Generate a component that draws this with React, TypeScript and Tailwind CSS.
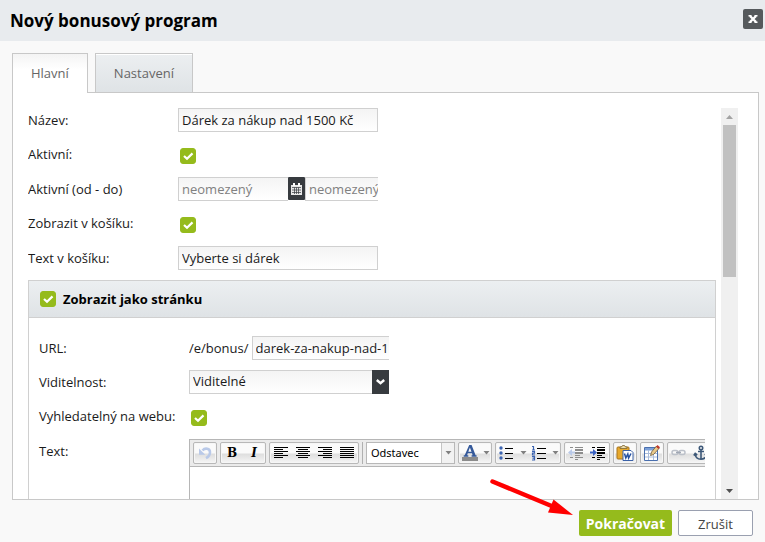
import { useState } from 'react'
import type { ComponentProps, ReactNode } from 'react'

const inputStyle =
  'h-6 border border-[#d0d0d0] bg-linear-to-b from-[#f4f4f4] to-white px-[3px] text-[13px] text-[#1a1a1a] outline-none placeholder:text-[#808080]'

function Check(props: ComponentProps<'input'>) {
  return (
    <span className="relative block size-4 shrink-0">
      <input
        type="checkbox"
        defaultChecked
        className="peer block size-4 appearance-none rounded-[3px] border border-[#c8c8c8] bg-white checked:border-[#95bb1c] checked:bg-[#95bb1c]"
        {...props}
      />
      <svg
        viewBox="0 0 16 16"
        className="pointer-events-none absolute inset-0 hidden size-4 peer-checked:block"
        fill="none"
        stroke="#fff"
        strokeWidth="2.2"
      >
        <path d="M4 8 7 10.800 12.500 5.400" />
      </svg>
    </span>
  )
}

type RowProps = { label: string; htmlFor: string; check?: boolean; children: ReactNode }

function Row({ label, htmlFor, check, children }: RowProps) {
  return (
    <div className={check ? 'flex h-[35px] items-start' : 'flex h-[34px] items-start'}>
      <label htmlFor={htmlFor} className="w-[150px] shrink-0 leading-6 whitespace-nowrap">
        {label}
      </label>
      {check ? <div className="pt-1.5 pl-0.5">{children}</div> : children}
    </div>
  )
}

// Skupina tlačítek v editoru
function Group({ children }: { children: ReactNode }) {
  return (
    <div className="flex h-[22px] shrink-0 items-stretch rounded-[2px] border border-[#b8b8b8] bg-linear-to-b from-[#fafafa] from-50% via-[#dedede] via-55% to-[#f6f6f6] shadow-[inset_0_0_0_1px_#f6f6f6]">
      {children}
    </div>
  )
}

function Tool({ title, children }: { title: string; children: ReactNode }) {
  return (
    <button type="button" title={title} aria-label={title} className="flex w-[22px] items-center justify-center text-black">
      {children}
    </button>
  )
}

function Caret() {
  return (
    <svg width="7" height="4" viewBox="0 0 7 4" className="shrink-0">
      <path d="M0.5 0h6L3.5 3.5z" fill="#808080" />
    </svg>
  )
}

function DropTool({ title, children }: { title: string; children: ReactNode }) {
  return (
    <button type="button" title={title} aria-label={title} className="flex w-8 items-center justify-between pr-px pl-[3px]">
      {children}
      <Caret />
    </button>
  )
}

function Lines({ d }: { d: string }) {
  return (
    <svg width="16" height="16" viewBox="0 0 16 16" shapeRendering="crispEdges" fill="none" stroke="#000">
      <path d={d} />
    </svg>
  )
}

function Indent({ arrow, arrowColor, color }: { arrow: string; arrowColor: string; color: string }) {
  return (
    <svg width="16" height="16" viewBox="0 0 16 16">
      <path
        d="M2 2.5h3M7 2.5h8M7 5h8M7 8h8M7 10.500h5M2 12.500h3M7 12.500h8M7 14.500h3"
        stroke={color}
        strokeWidth="1.200"
        shapeRendering="crispEdges"
      />
      <path d={arrow} fill={arrowColor} />
    </svg>
  )
}

function Toolbar() {
  return (
    <div className="flex h-[27px] gap-[3px] border-b border-[#b6b6b6] bg-[#ebebeb] px-[3px] pt-0.5">
      <Group>
        <Tool title="Zpět">
          <svg width="16" height="16" viewBox="0 0 16 16" fill="none">
            <path d="M5.5 5.5C8 2.5 13 3.2 13 7.2c0 2.6-1.6 4.6-4 6" stroke="#b9c9e8" strokeWidth="2.6" />
            <path d="M2 3.5v6.3h6.3z" fill="#b9c9e8" />
          </svg>
        </Tool>
      </Group>
      <Group>
        <Tool title="Tučné">
          <span className="font-['DejaVu_Serif',serif] text-[12px] leading-4 font-bold">B</span>
        </Tool>
        <Tool title="Kurzíva">
          <span className="font-['DejaVu_Serif',serif] text-[12px] leading-4 font-bold italic">I</span>
        </Tool>
      </Group>
      <Group>
        <Tool title="Zarovnat vlevo">
          <Lines d="M1 2.5h14M1 4.5h9M1 6.5h14M1 8.5h9M1 10.5h14M1 12.5h9" />
        </Tool>
        <Tool title="Zarovnat na střed">
          <Lines d="M1 2.5h14M3 4.5h10M1 6.5h14M3 8.5h10M1 10.5h14M3 12.5h10" />
        </Tool>
        <Tool title="Zarovnat vpravo">
          <Lines d="M1 2.5h14M6 4.5h9M1 6.5h14M6 8.5h9M1 10.5h14M6 12.5h9" />
        </Tool>
        <Tool title="Do bloku">
          <Lines d="M1 2.5h14M1 4.5h14M1 6.5h14M1 8.5h14M1 10.5h14M1 12.5h14" />
        </Tool>
      </Group>
      <div className="h-[22px] w-px shrink-0 bg-[#b0b0b0]" />
      <button
        type="button"
        aria-label="Formát: Odstavec"
        className="flex h-[22px] w-[89px] shrink-0 items-stretch border border-[#b8b8b8] bg-white text-left font-['Noto_Sans',sans-serif] text-[11px] leading-5 text-black"
      >
        <span className="flex-1 pl-1">Odstavec</span>
        <span className="flex w-[13px] items-center justify-center border-l border-[#c4c4c4] bg-[#f2f2f2]">
          <Caret />
        </span>
      </button>
      <Group>
        <DropTool title="Barva textu">
          <svg width="16" height="18" viewBox="0 0 16 18" className="shrink-0">
            <path
              d="M7.2 1h2.4l4 10.300h1v1.500H9.600v-1.500h1L10 9.200H5.800l-.7 2.100h1.200v1.500H1.700v-1.500h1zM7.900 3.400 6.300 7.800h3.200z"
              fill="#35599a"
            />
            <path d="M0 13h16v4H0z" fill="#8b8b8b" />
          </svg>
        </DropTool>
      </Group>
      <Group>
        <DropTool title="Odrážky">
          <svg width="15" height="16" viewBox="0 0 15 16" className="shrink-0">
            <g fill="#3c64b1">
              <circle cx="2" cy="3" r="1.7" />
              <circle cx="2" cy="8" r="1.7" />
              <circle cx="2" cy="13" r="1.7" />
            </g>
            <path d="M6 3.5h8M6 8.5h8M6 13.5h8" stroke="#000" shapeRendering="crispEdges" />
          </svg>
        </DropTool>
        <DropTool title="Číslování">
          <svg width="16" height="16" viewBox="0 0 16 16" className="shrink-0">
            <path
              d="M1 1.5h1.5V5M1 5h3M1 6.5h2.5V8.2H1.5V10H4M1 11.5h2.5V15H1M1.5 13.2h2"
              fill="none"
              stroke="#3c64b1"
              strokeWidth="1.2"
            />
            <path d="M6 3.5h9M6 8.5h9M6 13.5h9" stroke="#000" shapeRendering="crispEdges" />
          </svg>
        </DropTool>
      </Group>
      <Group>
        <Tool title="Zmenšit odsazení">
          <Indent arrow="M0 7.5 4 4v2.5h3v2H4V11z" arrowColor="#b9c9e8" color="#8c8c8c" />
        </Tool>
        <Tool title="Zvětšit odsazení">
          <Indent arrow="M7 7.5 3 4v2.5H0v2h3V11z" arrowColor="#3a62c4" color="#000" />
        </Tool>
      </Group>
      <Group>
        <Tool title="Vložit z Wordu">
          <svg width="18" height="16" viewBox="0 0 18 16">
            <rect x="1" y="2" width="12" height="12" rx="1" fill="#e8a92c" stroke="#a8741c" />
            <path d="M4 3.5V2h1.5l1-1.5h2l1 1.500H11v1.500z" fill="#eadcae" stroke="#7c6430" strokeWidth=".8" />
            <path d="M7 5.5h8l2 2v8H7z" fill="#fff" stroke="#3c62a8" />
            <path d="m8.500 8.500 1.300 4.500 2-4 .8 4 2.400-4.500" fill="none" stroke="#2450a0" strokeWidth="1.500" />
          </svg>
        </Tool>
      </Group>
      <Group>
        <Tool title="Tabulka">
          <svg width="16" height="16" viewBox="0 0 16 16">
            <path d="M.5 2.500h13v13H.5z" fill="#fff" stroke="#4a6fae" />
            <path d="M1 3h12v2.500H1z" fill="#7ba0d8" />
            <path d="M1 8.500h12M1 12h12M4.500 5v10M9.500 5v10" stroke="#a9bcdb" />
            <path d="m6.500 10.500 1-3.500L12.500 1 15 3.500 9.500 9.500z" fill="#e9c98a" stroke="#6f5a3a" strokeWidth=".8" />
            <path d="M12 1.700 13.500 0 16 2.200 14.500 4z" fill="#c0392b" />
          </svg>
        </Tool>
      </Group>
      <Group>
        <Tool title="Odkaz">
          <svg width="16" height="16" viewBox="0 0 16 16" fill="none" stroke="#bcc1ca" strokeWidth="1.500">
            <rect x="1" y="5.500" width="6" height="4" rx="2" />
            <rect x="8" y="5.500" width="6" height="4" rx="2" />
            <path d="M5 7.500h5" stroke="#a0a7b3" />
          </svg>
        </Tool>
        <Tool title="Záložka">
          <svg width="16" height="16" viewBox="0 0 16 16" fill="none" stroke="#3d5878" strokeWidth="1.600">
            <circle cx="8" cy="3" r="1.700" />
            <path d="M8 5v9.500M5 6.500h6M2 9c.3 3.500 2.500 5 6 5.300 3.500-.3 5.700-1.800 6-5.300M.8 10.500l1.400-2 2 1.500M11.800 10l2-1.500 1.400 2" />
          </svg>
        </Tool>
      </Group>
    </div>
  )
}

function ScrollBar() {
  return (
    <div aria-hidden="true" className="flex w-[17px] shrink-0 flex-col bg-[#f0f0f0]">
      <div className="flex h-[17px] items-center justify-center">
        <svg width="7" height="4" viewBox="0 0 7 4">
          <path d="M0 4h7L3.5 0z" fill="#a3a3a3" />
        </svg>
      </div>
      <div className="flex-1 px-0.5">
        <div className="h-[152px] bg-[#c1c1c1]" />
      </div>
      <div className="flex h-[17px] items-center justify-center">
        <svg width="7" height="4" viewBox="0 0 7 4">
          <path d="M0 0h7L3.5 4z" fill="#505050" />
        </svg>
      </div>
    </div>
  )
}

export default function App() {
  const [tab, setTab] = useState('main')

  const tabBase = 'border border-b-0 border-[#c8c8c8] px-[18px] text-[13px] text-[#666]'
  const tabOn = 'relative -mb-px h-10 bg-linear-to-b from-[#f4f4f4] to-white to-40%'
  const tabOff = 'h-[39px] bg-linear-to-b from-[#eceff1] to-[#dfe3e6] pt-px shadow-[inset_0_1px_0_#fff]'

  return (
    <div className="flex h-screen flex-col bg-[#f9f9f9] font-['Open_Sans',sans-serif] text-[13px] text-[#1a1a1a]">
      {/* Hlavička */}
      <header className="flex h-[41px] shrink-0 items-center justify-between bg-[#e8ebee] pr-0.5 pl-2.5">
        <h1 className="text-[17px] font-bold text-black">Nový bonusový program</h1>
        <button
          type="button"
          aria-label="Zavřít"
          className="mb-1 flex size-5 items-center justify-center rounded-[2px] bg-[#55595c] text-white"
        >
          <svg width="10" height="10" viewBox="0 0 10 10" fill="none" stroke="currentColor" strokeWidth="2.4">
            <path d="m2 2 6 6M8 2 2 8" />
            <path d="M.5 1.700h3M6.500 1.700h3M.5 8.300h3M6.500 8.300h3" strokeWidth="1.400" />
          </svg>
        </button>
      </header>

      <main className="flex min-h-0 flex-1 flex-col pt-3 pr-1.5 pl-3">
        {/* Záložky */}
        <div role="tablist" className="flex h-[39px] shrink-0 items-start gap-[7px]">
          <button
            type="button"
            role="tab"
            aria-selected={tab === 'main'}
            onClick={() => setTab('main')}
            className={`${tabBase} ${tab === 'main' ? tabOn : tabOff}`}
          >
            Hlavní
          </button>
          <button
            type="button"
            role="tab"
            aria-selected={tab === 'settings'}
            onClick={() => setTab('settings')}
            className={`${tabBase} ${tab === 'settings' ? tabOn : tabOff}`}
          >
            Nastavení
          </button>
        </div>

        <div className="flex min-h-0 flex-1 gap-[5px] border border-[#c8c8c8] bg-white pt-[15px] pr-5 pl-[15px]">
          <form className="min-w-0 flex-1 overflow-hidden">
            <Row label="Název:" htmlFor="name">
              <input id="name" className={`${inputStyle} w-[200px]`} defaultValue="Dárek za nákup nad 1500 Kč" />
            </Row>
            <Row label="Aktivní:" htmlFor="active" check>
              <Check id="active" />
            </Row>
            <Row label="Aktivní (od - do)" htmlFor="from">
              <div className="flex w-[200px] overflow-hidden">
                <input id="from" placeholder="neomezený" className={`${inputStyle} w-[110px] shrink-0 border-r-0`} />
                <button
                  type="button"
                  aria-label="Vybrat datum"
                  className="flex h-[23px] w-[17px] shrink-0 items-center justify-center rounded-[1px] bg-[#373b3f]"
                >
                  <svg width="11" height="12" viewBox="0 0 11 12">
                    <path d="M0 2h11v10H0z" fill="#e8e8e8" />
                    <path d="M2 0h2v3H2zM7 0h2v3H7z" fill="#fff" />
                    <path
                      d="M1 4.5h9M1 7h9M1 9.500h9M3.500 4.500V11M5.500 4.500V11M7.500 4.500V11"
                      stroke="#373b3f"
                      strokeWidth=".7"
                    />
                  </svg>
                </button>
                <input
                  aria-label="Aktivní do"
                  placeholder="neomezený"
                  className={`${inputStyle} w-[110px] shrink-0`}
                />
              </div>
            </Row>
            <Row label="Zobrazit v košíku:" htmlFor="cart" check>
              <Check id="cart" />
            </Row>
            <Row label="Text v košíku:" htmlFor="cartText">
              <input id="cartText" className={`${inputStyle} w-[200px]`} defaultValue="Vyberte si dárek" />
            </Row>

            {/* Zobrazit jako stránku */}
            <section className="border border-[#d0d0d0]">
              <div className="flex h-[37px] items-center gap-[7px] border-b border-[#d0d0d0] bg-linear-to-b from-[#eceff1] to-[#dfe3e6] pl-[11px]">
                <Check id="page" />
                <label htmlFor="page" className="text-[13px] leading-5 font-bold text-black">
                  Zobrazit jako stránku
                </label>
              </div>
              <div className="px-2.5 pt-[18px]">
                <Row label="URL:" htmlFor="url">
                  <div className="flex w-[200px] gap-[3px] overflow-hidden">
                    <span className="leading-6">/e/bonus/</span>
                    <input
                      id="url"
                      className={`${inputStyle} w-[200px] shrink-0`}
                      defaultValue="darek-za-nakup-nad-1500-kc"
                    />
                  </div>
                </Row>
                <Row label="Viditelnost:" htmlFor="visibility">
                  <div className="relative">
                    <select id="visibility" className={`${inputStyle} w-[200px] appearance-none`}>
                      <option>Viditelné</option>
                      <option>Skryté</option>
                    </select>
                    <span className="pointer-events-none absolute inset-y-0 right-0 flex w-[17px] items-center justify-center bg-[#373b3f]">
                      <svg width="9" height="6" viewBox="0 0 9 6" fill="none" stroke="#fff" strokeWidth="2.4">
                        <path d="m.8 1 3.700 3.200L8.200 1" />
                      </svg>
                    </span>
                  </div>
                </Row>
                <Row label="Vyhledatelný na webu:" htmlFor="searchable" check>
                  <Check id="searchable" />
                </Row>
                <div className="flex">
                  <label htmlFor="text" className="w-[150px] shrink-0 leading-6">
                    Text:
                  </label>
                  <div className="min-w-0 flex-1 overflow-hidden border-t border-l border-[#b6b6b6]">
                    <Toolbar />
                    <textarea id="text" className="block h-40 w-full resize-none bg-white p-2 outline-none" />
                  </div>
                </div>
              </div>
            </section>
          </form>
          <ScrollBar />
        </div>
      </main>

      {/* Patička s akcemi */}
      <footer className="flex shrink-0 justify-end gap-1.5 pt-2.5 pr-3 pb-1.5">
        <div className="relative">
          <button
            type="button"
            className="block h-[26px] w-[93px] rounded-[2px] bg-[#95bb1c] text-[14px] leading-7 font-bold text-white"
          >
            Pokračovat
          </button>
          <svg
            width="90"
            height="50"
            viewBox="0 0 90 50"
            aria-hidden="true"
            className="pointer-events-none absolute -top-9 right-full mr-[3px]"
          >
            <path d="M6.500 7.500 68 33" stroke="#f00" strokeWidth="4.500" strokeLinecap="round" />
            <path d="m67.500 25.500 19.500 15.500-25-2.500z" fill="#f00" />
          </svg>
        </div>
        <button
          type="button"
          className="h-[26px] w-[75px] rounded-[2px] border border-[#9aa0b0] bg-white text-[13px] leading-[26px] text-[#444]"
        >
          Zrušit
        </button>
      </footer>
    </div>
  )
}
